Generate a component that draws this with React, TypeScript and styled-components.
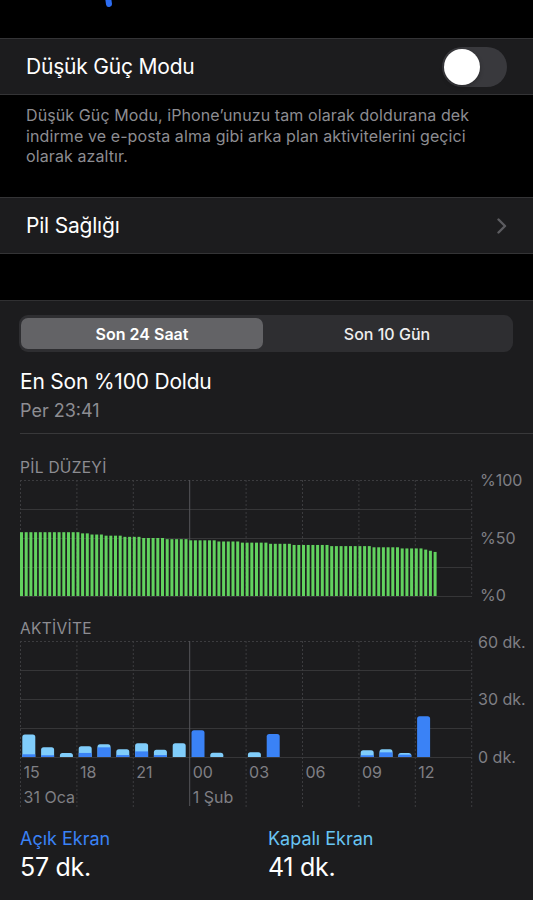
import React from "react";
import styled, { createGlobalStyle } from "styled-components";

const Global = createGlobalStyle`
  html, body { margin: 0; padding: 0; background: #000; }
  body { font-family: "Inter", "Noto Sans", "Liberation Sans", sans-serif; -webkit-font-smoothing: antialiased; overflow: hidden; }
  * { box-sizing: border-box; }
`;

const Page = styled.div`
  width: 533px;
  height: 900px;
  display: flex;
  flex-direction: column;
  background: #000;
  color: #fff;
  overflow: hidden;
`;

const TopStrip = styled.div`
  height: 38px;
  flex: none;
  padding-left: 103px;
  line-height: 0;
`;

const Row = styled.div`
  flex: none;
  height: 57px;
  display: flex;
  align-items: center;
  justify-content: space-between;
  padding: 0 26px;
  background: #1c1c1e;
  border-top: 1px solid #343436;
  border-bottom: 1px solid #343436;
`;

const RowLabel = styled.span`
  font-size: 21px;
  letter-spacing: -0.2px;
  color: #fff;
`;

const Toggle = styled.div`
  width: 65px;
  height: 40px;
  border-radius: 20px;
  background: #39393d;
  padding: 2px;
  display: flex;
  align-items: center;
`;

const Knob = styled.div`
  width: 36px;
  height: 36px;
  border-radius: 50%;
  background: #fff;
  box-shadow: 0 2px 4px rgba(0, 0, 0, 0.25);
`;

const Footer = styled.p`
  flex: none;
  margin: 0;
  height: 102px;
  padding: 10px 50px 0 26px;
  font-size: 16px;
  line-height: 20.5px;
  letter-spacing: 0.1px;
  color: #8d8d92;
`;

const Gap = styled.div`
  flex: none;
  height: 46px;
`;

const Card = styled.section`
  flex: 1;
  background: #1c1c1e;
  border-top: 1px solid #303032;
  padding: 14px 0 0 20px;
  display: flex;
  flex-direction: column;
`;

const Segmented = styled.div`
  width: 494px;
  height: 37px;
  margin-left: -1px;
  border-radius: 9px;
  background: #2e2e31;
  padding: 3px 2px;
  display: grid;
  grid-template-columns: 242px 1fr;
`;

const Segment = styled.div<{ $active?: boolean }>`
  display: flex;
  align-items: center;
  justify-content: center;
  border-radius: 7px;
  font-size: 16px;
  font-weight: ${(p) => (p.$active ? 600 : 500)};
  color: #fff;
  background: ${(p) => (p.$active ? "#636366" : "transparent")};
  opacity: ${(p) => (p.$active ? 1 : 0.92)};
`;

const Title = styled.div`
  margin-top: 17px;
  font-size: 21px;
  line-height: 26px;
  letter-spacing: -0.2px;
`;

const Sub = styled.div`
  margin-top: 5px;
  font-size: 18px;
  line-height: 22px;
  color: #8d8d92;
`;

const Divider = styled.div`
  margin-top: 11px;
  height: 1px;
  background: #38383a;
`;

const Caption = styled.div<{ $gap: number }>`
  margin-top: ${(p) => p.$gap}px;
  font-size: 15.5px;
  line-height: 18px;
  color: #8d8d92;
  letter-spacing: 0.3px;
`;

const ChartSvg = styled.svg`
  display: block;
  flex: none;
  overflow: visible;
  font-family: "Inter", "Noto Sans", sans-serif;
`;

const Stats = styled.div`
  margin-top: 15px;
  display: grid;
  grid-template-columns: 248px 1fr;
`;

const Stat = styled.div`
  display: flex;
  flex-direction: column;
`;

const StatLabel = styled.span<{ $color: string }>`
  font-size: 18px;
  line-height: 23px;
  color: ${(p) => p.$color};
`;

const StatValue = styled.span`
  margin-top: 2px;
  font-size: 25px;
  line-height: 30px;
  color: #fff;
  letter-spacing: -0.3px;
`;

const COL = 56.4;
const GRID_SOLID = "#363638";
const GRID_DOT = "#3c3c3f";
const MID = "#56565a";
const AXIS_TXT = "#7f7f84";

const batteryPoints: [number, number][] = [
  [20, 64], [68, 64], [110, 60.3], [157, 57.7], [200, 55.7], [255, 53.3],
  [305, 51], [357, 49.7], [412, 47.7], [420, 47], [436, 44],
];
function interp(x: number) {
  for (let i = 0; i < batteryPoints.length - 1; i++) {
    const [x0, y0] = batteryPoints[i];
    const [x1, y1] = batteryPoints[i + 1];
    if (x >= x0 && x <= x1) return y0 + ((y1 - y0) * (x - x0)) / (x1 - x0);
  }
  return batteryPoints[batteryPoints.length - 1][1];
}
const BATTERY = Array.from({ length: 89 }, (_, i) => Math.round(interp(20 + 4.7 * i) / 1.16));

// [total minutes, screen-on minutes]
const ACTIVITY: [number, number][] = [
  [11.7, 1.4], [5.0, 0.9], [2.1, 0], [5.5, 2.1], [6.6, 5.0], [4.0, 1.0], [7.1, 2.9], [3.8, 1.0],
  [7.1, 0], [13.8, 13.8], [2.2, 0], [0, 0], [2.4, 0], [11.9, 11.9], [0, 0], [0, 0], [0, 0], [0, 0],
  [3.5, 0.9], [4.0, 2.4], [2.1, 1.2], [21.1, 21.1],
];
const HOURS = ["15", "18", "21", "00", "03", "06", "09", "12"];

function roundTop(x: number, y: number, w: number, h: number, r: number) {
  const rr = Math.min(r, h, w / 2);
  return `M${x} ${y + h}V${y + rr}Q${x} ${y} ${x + rr} ${y}H${x + w - rr}Q${x + w} ${y} ${x + w} ${y + rr}V${y + h}Z`;
}

function Grid({ vEnd }: { vEnd: number }) {
  const ys = [3, 32, 61, 90, 119];
  return (
    <g>
      {ys.map((y, i) => (
        <line key={"h" + i} x1={0} x2={452} y1={y + 0.5} y2={y + 0.5} stroke={i === 0 ? GRID_DOT : GRID_SOLID}
          strokeWidth={1} strokeDasharray={i === 0 ? "2 2" : undefined} />
      ))}
      {Array.from({ length: 9 }, (_, k) => (
        <line key={"v" + k} x1={k * COL + 0.5} x2={k * COL + 0.5} y1={3} y2={k === 3 ? vEnd - 1 : vEnd}
          stroke={k === 3 ? MID : GRID_DOT} strokeWidth={1} strokeDasharray={k === 3 ? undefined : "2 2"} />
      ))}
    </g>
  );
}

function BatteryChart() {
  return (
    <ChartSvg width={513} height={124} viewBox="0 0 513 124">
      <Grid vEnd={119} />
      {BATTERY.map((p, i) => {
        const h = p * 1.16;
        return <rect key={i} x={4.7 * i} y={119 - h} width={3} height={h} fill="#62d25f" />;
      })}
      <g fill={AXIS_TXT} fontSize={16}>
        <text x={460} y={9}>%100</text>
        <text x={460} y={67}>%50</text>
        <text x={460} y={124}>%0</text>
      </g>
    </ChartSvg>
  );
}

function ActivityChart() {
  const ppm = 116 / 60;
  return (
    <ChartSvg width={513} height={174} viewBox="0 0 513 174">
      <Grid vEnd={169} />
      {ACTIVITY.map(([total, on], i) => {
        if (total <= 0) return null;
        const x = 2.3 + i * 18.8;
        const th = total * ppm;
        const dh = on * ppm;
        if (on >= total) {
          return <path key={i} d={roundTop(x, 119 - th, 13, th, 2.5)} fill="#3a82f6" />;
        }
        return (
          <g key={i}>
            <path d={roundTop(x, 119 - th, 13, th, 2.5)} fill="#80cdfb" />
            {dh > 0 && <rect x={x} y={119 - dh} width={13} height={dh} fill="#3a82f6" />}
          </g>
        );
      })}
      <g fill={AXIS_TXT} fontSize={16}>
        <text x={458} y={10}>60 dk.</text>
        <text x={458} y={67}>30 dk.</text>
        <text x={458} y={125}>0 dk.</text>
        {HOURS.map((h, k) => (
          <text key={h} x={k * COL + 3.5} y={140}>{h}</text>
        ))}
        <text x={3.5} y={164.5}>31 Oca</text>
        <text x={3 * COL + 3.5} y={164.5}>1 Şub</text>
      </g>
    </ChartSvg>
  );
}

export default function App() {
  return (
    <Page>
      <Global />
      <TopStrip>
        <svg width="12" height="10" viewBox="0 0 12 10">
          <path d="M5 -3 L6 4" stroke="#2d6df2" strokeWidth={6} strokeLinecap="round" fill="none" />
        </svg>
      </TopStrip>
      <Row>
        <RowLabel>Düşük Güç Modu</RowLabel>
        <Toggle>
          <Knob />
        </Toggle>
      </Row>
      <Footer>
        Düşük Güç Modu, iPhone’unuzu tam olarak doldurana dek indirme ve e-posta alma gibi arka plan aktivitelerini geçici olarak azaltır.
      </Footer>
      <Row>
        <RowLabel>Pil Sağlığı</RowLabel>
        <svg width="10" height="16" viewBox="0 0 10 16">
          <path d="M1.5 1.5 L8 8 L1.5 14.5" stroke="#5c5c60" strokeWidth={2.4} fill="none" strokeLinecap="round" strokeLinejoin="round" />
        </svg>
      </Row>
      <Gap />
      <Card>
        <Segmented>
          <Segment $active>Son 24 Saat</Segment>
          <Segment>Son 10 Gün</Segment>
        </Segmented>
        <Title>En Son %100 Doldu</Title>
        <Sub>Per 23:41</Sub>
        <Divider />
        <Caption $gap={25}>PİL DÜZEYİ</Caption>
        <BatteryChart />
        <Caption $gap={19}>AKTİVİTE</Caption>
        <ActivityChart />
        <Stats>
          <Stat>
            <StatLabel $color="#3a82f6">Açık Ekran</StatLabel>
            <StatValue>57 dk.</StatValue>
          </Stat>
          <Stat>
            <StatLabel $color="#68c4f3">Kapalı Ekran</StatLabel>
            <StatValue>41 dk.</StatValue>
          </Stat>
        </Stats>
      </Card>
    </Page>
  );
}
